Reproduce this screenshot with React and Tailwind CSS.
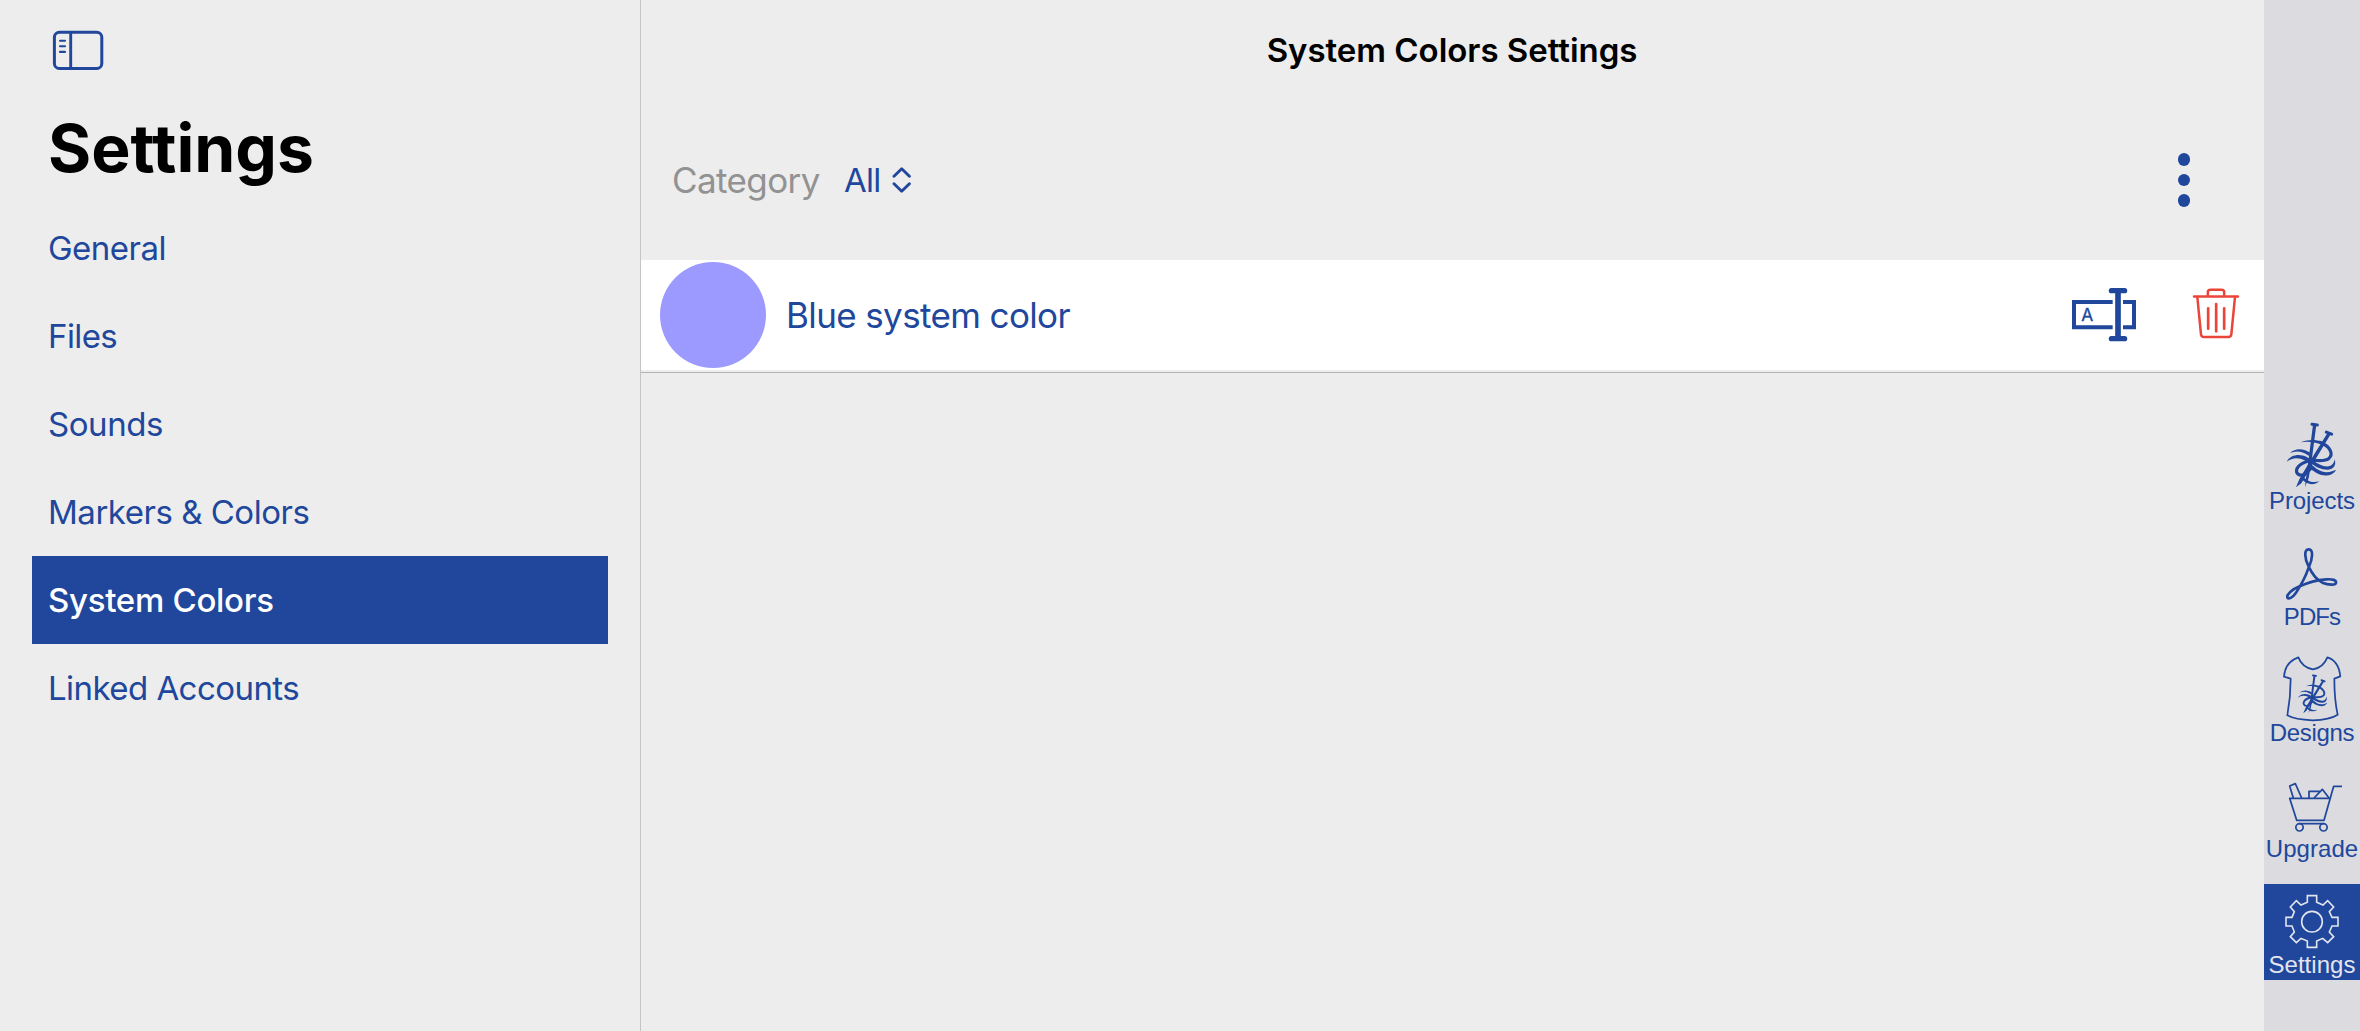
import React from "react";

const menu = [
  { label: "General", spacing: "tracking-[-0.5px]" },
  { label: "Files", spacing: "tracking-[-0.6px]" },
  { label: "Sounds", spacing: "tracking-[-0.43px]" },
  { label: "Markers & Colors", spacing: "tracking-[-0.48px]" },
  { label: "System Colors", spacing: "tracking-[-0.28px]", active: true },
  { label: "Linked Accounts", spacing: "tracking-[-0.55px]" },
];

function SidebarIcon() {
  return (
    <svg className="h-[40px] w-[52px]" viewBox="0 0 52 40" fill="none" stroke="currentColor">
      <rect x="2.400" y="2.300" width="47.400" height="36.200" rx="5" strokeWidth="3" />
      <path d="M18.700 2v37" strokeWidth="2.900" />
      <path d="M8 10.700h5M8 16.200h5M8 21.900h5" strokeWidth="2.100" strokeLinecap="round" />
    </svg>
  );
}

function SortIcon() {
  return (
    <svg className="h-[26px] w-[19px]" viewBox="0 0 19 26" fill="none" stroke="currentColor" strokeWidth="2.900" strokeLinecap="round" strokeLinejoin="round">
      <path d="M2 9.200 9.700 1.700l7.700 7.500M2 16.800 9.700 24.300 17.400 16.800" />
    </svg>
  );
}

function RenameIcon() {
  return (
    <svg className="h-[54px] w-[64px]" viewBox="0 0 192 162">
      <g fill="none" stroke="currentColor">
        <path d="M122 42H6v75.500h116M153 42h33v75.500h-33" strokeWidth="12" />
        <path d="M138 8v144" strokeWidth="17" />
        <path d="M118 8h40M118 152h40" strokeWidth="15.500" strokeLinecap="round" />
      </g>
      <text x="27.500" y="99" fontSize="53" textLength="36" lengthAdjust="spacingAndGlyphs" fill="currentColor" stroke="currentColor" strokeWidth="1">
        A
      </text>
    </svg>
  );
}

function TrashIcon() {
  return (
    <svg className="h-[51px] w-[46px] overflow-visible" viewBox="0 0 138 153" fill="none" stroke="currentColor" strokeWidth="7.500" strokeLinecap="round" strokeLinejoin="round">
      <path d="M3 25.500h132M44.500 24V12q0-7 8-7h33q8 0 8 7v12" />
      <path d="M13 27l11 112q1 8 9 8h73q8 0 9-8l11-112" />
      <path d="M45.500 61v61M69.500 48v82M93.500 61v61" strokeWidth="8" />
    </svg>
  );
}

function YarnShape() {
  return (
    <g>
      <path d="M99 20H109L94 135L86 180L75 207L78 180L85 130Z" fill="currentColor" />
      <path d="M143 44L152 49L101 133L64 196L48 208L58 184L92 126Z" fill="currentColor" />
      <path d="M96 18.500 112 21M139 42.500 155 48.500" fill="none" stroke="currentColor" strokeWidth="9" strokeLinecap="round" />
      <path d="M62 73C86 63 108 65 124 70L122 79C104 72 82 69 62 73Z" fill="currentColor" />
      <path d="M120 73C151 85 161 109 147 121C134 133 108 125 92 128C73 131 54 141 50 154C47 167 58 174 70 170C80 166 88 156 97 146" fill="none" stroke="currentColor" strokeWidth="9.500" />
      <path d="M30 105C48 88 72 92 92 105L86 113C66 99 48 97 30 105Z" fill="currentColor" />
      <path d="M20 131C33 109 59 107 80 117L95 126L88 136L74 127C55 117 36 119 20 131Z" fill="currentColor" />
      <path d="M97 126C113 138 130 147 146 145C157 143 163 135 164 124C170 142 160 154 145 155C125 156 106 146 92 135Z" fill="currentColor" />
      <path d="M93 139C108 152 121 163 140 163C152 163 161 157 169 155C159 170 145 175 131 172C111 169 99 157 86 149Z" fill="currentColor" />
      <path d="M68 176C84 187 93 197 118 190C101 204 80 200 65 183Z" fill="currentColor" />
    </g>
  );
}

function ProjectsIcon() {
  return (
    <svg className="block h-[65px] w-[96px] overflow-visible" viewBox="0 0 96 65">
      <g transform="translate(16 -2) scale(.3333)">
        <YarnShape />
      </g>
    </svg>
  );
}

function PdfIcon() {
  return (
    <svg className="block h-[65px] w-[96px] overflow-visible" viewBox="27 18 288 195" fill="none" stroke="currentColor" strokeWidth="8" strokeLinecap="round" strokeLinejoin="round">
      <path d="M161 110C149 87 146 58 161 58C176 58 173 87 161 113C154 133 140 163 123 188C113 203 99 210 97 202C95 192 112 178 134 169C157 158 187 150 214 148C233 147 244 150 243 158C242 167 220 165 202 158C184 149 171 131 161 110Z" />
    </svg>
  );
}

function DesignsIcon() {
  return (
    <svg className="block h-[65px] w-[96px] overflow-visible" viewBox="27 21 288 195" fill="none" stroke="currentColor" strokeWidth="5.200" strokeLinejoin="round">
      <path d="M130 37C139 61 158 70 174 73C190 70 208 61 217 37C241 44 253 66 256 94L238 101C238 139 240 173 248 209C230 221 205 225 173 226C141 225 116 222 97 211C104 173 107 138 107 101L87 95C89 67 104 46 130 37Z" />
      <g transform="translate(116 80) scale(.6)" strokeWidth="0">
        <YarnShape />
      </g>
    </svg>
  );
}

function CartIcon() {
  return (
    <svg className="block h-[65px] w-[96px] overflow-visible" viewBox="27 9 288 195" fill="none" stroke="currentColor" strokeWidth="5.200" strokeLinejoin="round">
      <path d="M261 64H236L207 166H125L104 100H225" />
      <path d="M115 99 104 63 121 56 140 99M162 99V79H197M177 99 202 73 222 99" />
      <path d="M133 176H206" />
      <circle cx="133.500" cy="187" r="11" />
      <circle cx="205.500" cy="187" r="11" />
    </svg>
  );
}

function GearIcon() {
  return (
    <svg className="block h-[65px] w-[96px] overflow-visible" viewBox="27 27 288 195" fill="none" stroke="currentColor" strokeWidth="4.800" strokeLinejoin="miter">
      <path d="M157 62H185V82L204 90L218 77L236 96L223 110L231 127H249V153H231L223 171L236 185L218 203L203 190L185 198V217H157V198L138 190L124 203L106 185L118 171L111 153H93V127H111L118 110L106 96L124 77L138 90L157 82Z" />
      <circle cx="171" cy="140" r="31" />
    </svg>
  );
}

const tabs = [
  { label: "Projects", Icon: ProjectsIcon, spacing: "tracking-[-0.1px]" },
  { label: "PDFs", Icon: PdfIcon, spacing: "tracking-[-0.9px]" },
  { label: "Designs", Icon: DesignsIcon, spacing: "tracking-[-0.3px]" },
  { label: "Upgrade", Icon: CartIcon, spacing: "tracking-[0.05px]" },
  { label: "Settings", Icon: GearIcon, spacing: "tracking-[0.05px]", active: true },
];

export default function App() {
  return (
    <div className="flex h-[1031px] w-[2360px] overflow-hidden bg-[#ededed] font-['Inter',sans-serif] text-[#20479c]">
      <aside className="flex w-[640px] shrink-0 flex-col">
        <button className="mt-[30px] ml-[52px] h-[40px] w-[52px]">
          <SidebarIcon />
        </button>
        <h1 className="mt-[38px] ml-12 text-[66px] leading-[80px] font-bold tracking-[-0.03px] text-black">Settings</h1>
        <nav className="mt-4 flex flex-col px-8">
          {menu.map(({ label, spacing, active }) => (
            <a
              key={label}
              className={`flex h-[88px] items-center pl-4 text-[33px] leading-[40px] ${spacing} ${
                active ? "bg-[#20479c] font-medium text-white" : ""
              }`}
            >
              {label}
            </a>
          ))}
        </nav>
      </aside>

      <main className="flex w-[1624px] shrink-0 flex-col border-l border-[#c4c4c5]">
        <header className="flex h-[100px] items-center justify-center pr-px text-[33px] leading-[40px] font-semibold tracking-[-0.03px] text-black">
          System Colors Settings
        </header>
        <div className="flex h-[160px] items-center pr-[74px] pl-[31px]">
          <span className="w-[172px] text-[35px] leading-[41px] tracking-[-0.6px] text-[#929293]">Category</span>
          <span className="w-[48px] text-[33px] leading-[40px] tracking-[-0.7px]">All</span>
          <SortIcon />
          <button className="ml-auto flex flex-col gap-2">
            <i className="size-[12.500px] rounded-full bg-current" />
            <i className="size-[12.500px] rounded-full bg-current" />
            <i className="size-[12.500px] rounded-full bg-current" />
          </button>
        </div>
        <div className="flex h-[110px] items-center bg-white pr-[25px] pl-[19px]">
          <span className="size-[106px] rounded-full bg-[#9c99ff]" />
          <span className="ml-5 text-[35px] leading-[42px] tracking-[-0.62px]">Blue system color</span>
          <button className="ml-auto">
            <RenameIcon />
          </button>
          <button className="ml-[57px] pb-[3px] text-[#eb4539]">
            <TrashIcon />
          </button>
        </div>
        <div className="h-[3px] border-b border-[#b4b5b6]" />
      </main>

      <nav className="flex w-24 shrink-0 flex-col gap-5 bg-[#dbdbe0] pt-[420px] font-['Liberation_Sans',sans-serif]">
        {tabs.map(({ label, Icon, spacing, active }) => (
          <a key={label} className={`flex h-24 flex-col items-center ${active ? "bg-[#20479c] text-[#e3e5ef]" : ""}`}>
            <Icon />
            <span className={`text-2xl leading-[31px] whitespace-nowrap ${spacing}`}>{label}</span>
          </a>
        ))}
      </nav>
    </div>
  );
}
